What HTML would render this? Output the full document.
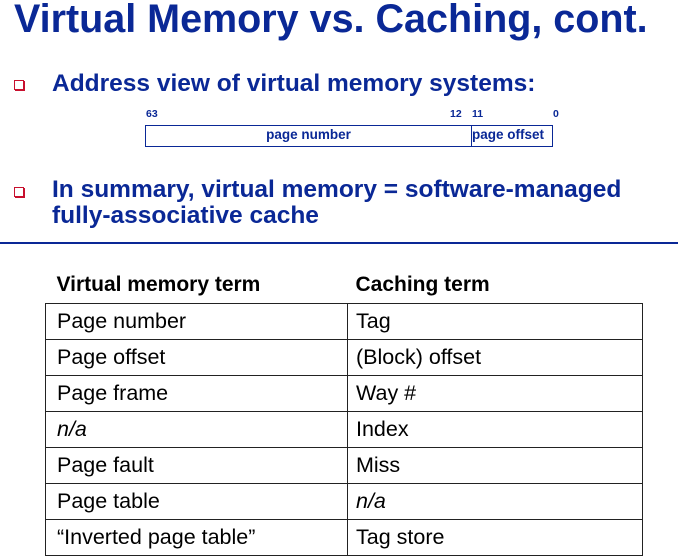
<!DOCTYPE html>
<html><head><style>
body{margin:0;width:678px;height:560px;background:#fff;position:relative;overflow:hidden;font-family:"Liberation Sans",Arial,sans-serif;}
.a{position:absolute;white-space:nowrap;}
.t{left:14px;top:-3px;font-size:39.5px;font-weight:bold;color:#0a2896;}
.b{font-size:24.5px;font-weight:bold;color:#0a2896;}
.sq{position:absolute;width:8px;height:8px;border:1.5px solid #c8102e;box-shadow:1px 1px 0 #c8102e;}
.n{font-size:10.5px;font-weight:bold;color:#0a2896;}
table{position:absolute;left:45px;top:267px;border-collapse:collapse;table-layout:fixed;width:597px;font-size:21.5px;color:#000;}
td{border:1.5px solid #222;height:35px;padding:0 0 0 11px;}
td+td{padding-left:8px}
th{text-align:left;font-weight:bold;padding:0 0 0 11px;height:36px;border:none;font-size:21px;}
th+th{padding-left:8px}
</style></head><body>
<div class="a t">Virtual Memory vs. Caching, cont.</div>
<div class="sq" style="left:14px;top:80px"></div>
<div class="a b" style="left:52px;top:70px">Address view of virtual memory systems:</div>
<div class="a n" style="left:146px;top:108px">63</div>
<div class="a n" style="left:450px;top:108px">12</div>
<div class="a n" style="left:472px;top:108px">11</div>
<div class="a n" style="left:553px;top:108px">0</div>
<div class="a" style="left:145px;top:125px;width:406px;height:20px;border:1px solid #0a2896;"></div>
<div class="a" style="left:471px;top:125px;width:1px;height:22px;background:#0a2896"></div>
<div class="a" style="left:146px;top:127px;width:325px;text-align:center;font-size:13.5px;font-weight:bold;color:#0a2896">page number</div>
<div class="a" style="left:472px;top:127px;font-size:13.5px;font-weight:bold;color:#0a2896">page offset</div>
<div class="sq" style="left:14px;top:187px"></div>
<div class="a b" style="left:52px;top:177px;line-height:26px">In summary, virtual memory = software-managed<br>fully-associative cache</div>
<div class="a" style="left:0;top:242px;width:678px;height:2px;background:#0a2896"></div>
<table>
<colgroup><col style="width:302px"><col style="width:295px"></colgroup>
<tr><th>Virtual memory term</th><th>Caching term</th></tr>
<tr><td>Page number</td><td>Tag</td></tr>
<tr><td>Page offset</td><td>(Block) offset</td></tr>
<tr><td>Page frame</td><td>Way #</td></tr>
<tr><td><i>n/a</i></td><td>Index</td></tr>
<tr><td>Page fault</td><td>Miss</td></tr>
<tr><td>Page table</td><td><i>n/a</i></td></tr>
<tr><td>“Inverted page table”</td><td>Tag store</td></tr>
</table>
</body></html>
